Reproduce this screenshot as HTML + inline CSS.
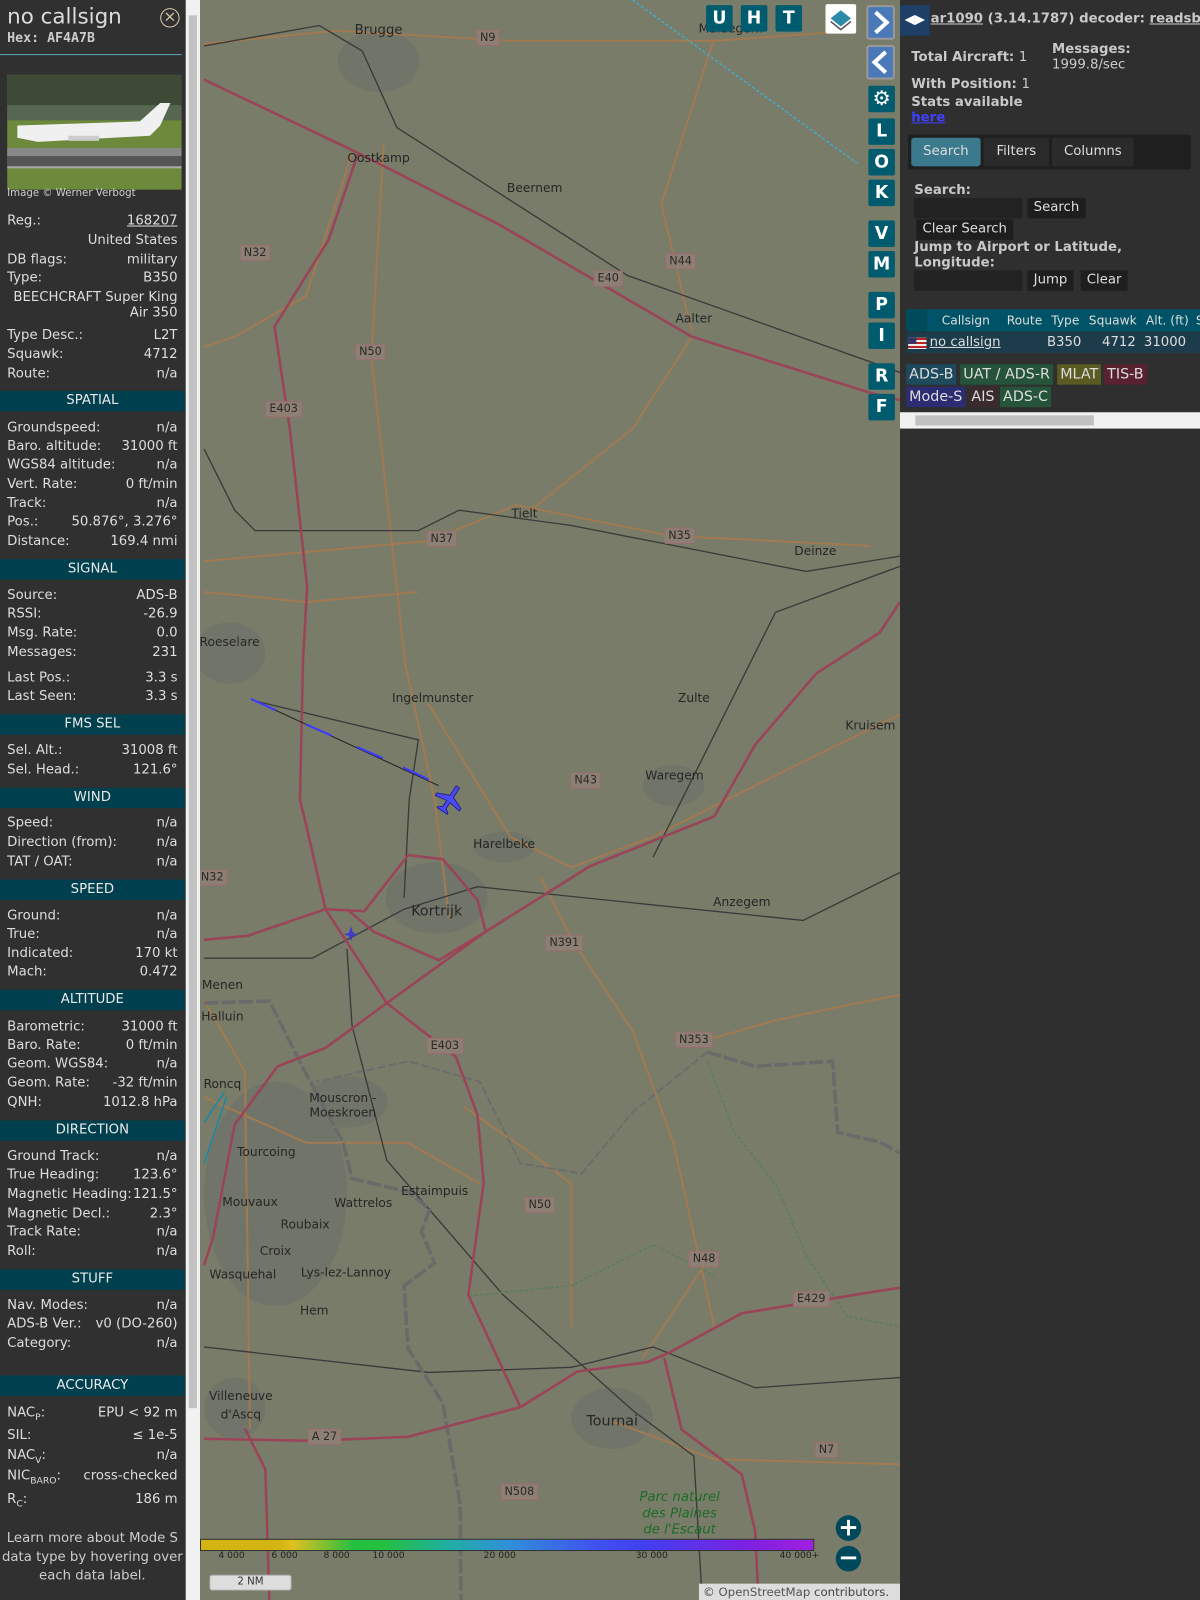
<!DOCTYPE html>
<html><head><meta charset="utf-8">
<style>
*{margin:0;padding:0;box-sizing:border-box}
body{width:1200px;height:1600px;overflow:hidden;background:#2f2f2f;font-family:"DejaVu Sans","Liberation Sans",sans-serif;font-size:13px;color:#ddd;position:relative}
#wrap{position:absolute;left:0;top:0;width:1176px;height:1568px;transform:scale(1.020408);transform-origin:0 0}
#left{position:absolute;left:0;top:0;width:182px;height:1568px;background:#303030}
.r{position:absolute;left:7px;width:167px;height:18px;line-height:18px;white-space:nowrap}
.r b{font-weight:normal;float:right}
.h{position:absolute;left:0;width:181px;height:20px;line-height:20px;background:#003f4d;text-align:center;color:#e8e8e8}
#sb{position:absolute;left:182px;top:0;width:14px;height:1568px;background:#f1f1f1}
#sb i{position:absolute;left:3px;top:15px;width:8px;height:1365px;background:#c1c1c1}
#map{position:absolute;left:196px;top:0;width:686px;height:1568px;background:#787c69;overflow:hidden}
.t{position:absolute;color:#262626;font-size:12px;white-space:nowrap;transform:translate(-50%,-50%)}
.n{position:absolute;font-size:11px;color:#2a2a2a;background:#8d7f74;border:1px solid #9a6e70;border-radius:2px;padding:0 3px;line-height:14px;transform:translate(-50%,-50%)}
.mb{position:absolute;width:26px;height:26px;background:#005b6e;color:#fff;font-weight:bold;font-size:17px;text-align:center;line-height:26px;border-radius:2px}
#right{position:absolute;left:882px;top:0;width:294px;height:1568px;background:#2f2f2f;overflow:hidden}
.bd{font-weight:bold;color:#c8c8c8}
.btn{position:absolute;background:#1e1e1e;color:#ddd;height:20px;line-height:20px;padding:0 6px}
.bg{position:absolute;height:20px;line-height:20px;padding:0 3px;color:#ddd;font-size:14px}
</style></head><body><div id="wrap">
<div id="left">
<div style="position:absolute;left:7px;top:4px;font-size:21px;color:#ddd">no callsign</div>
<div style="position:absolute;left:157px;top:8px;width:19px;height:19px;border:1.5px solid #d8c9a8;border-radius:50%;color:#d8c9a8;text-align:center;line-height:15px;font-size:15px">×</div>
<div style="position:absolute;left:7px;top:30px;font-family:'DejaVu Sans Mono',monospace;font-weight:bold;font-size:13px;color:#ccc">Hex: AF4A7B</div>
<div style="position:absolute;left:0;top:53px;width:178px;height:1px;background:#5aa8c0"></div>
<svg style="position:absolute;left:7px;top:73px" width="171" height="113">
<rect width="171" height="113" fill="#6d8a3c"/><rect width="171" height="40" fill="#3d4a35"/>
<rect y="30" width="171" height="15" fill="#566650"/>
<rect y="72" width="171" height="8" fill="#888"/><rect y="80" width="171" height="10" fill="#555"/><rect y="90" width="171" height="2" fill="#aaa"/>
<path d="M10 50 L130 46 L150 28 L160 28 L150 50 L140 60 L30 66 L10 62 Z" fill="#f0f0f0"/>
<rect x="60" y="60" width="30" height="5" fill="#ccc"/>
</svg>
<div style="position:absolute;left:7px;top:184px;font-size:10px;color:#ccc">Image © Werner Verbogt</div>
<div class="r" style="top:208px">Reg.:<b style="text-decoration:underline">168207</b></div>
<div class="r" style="top:227px"><b>United States</b></div>
<div class="r" style="top:246px">DB flags:<b>military</b></div>
<div class="r" style="top:264px">Type:<b>B350</b></div>
<div class="r" style="top:283px;text-align:right">BEECHCRAFT Super King</div>
<div class="r" style="top:298px"><b>Air 350</b></div>
<div class="r" style="top:320px">Type Desc.:<b>L2T</b></div>
<div class="r" style="top:339px">Squawk:<b>4712</b></div>
<div class="r" style="top:358px">Route:<b>n/a</b></div>
<div class="h" style="top:383px">SPATIAL</div>
<div class="r" style="top:411px">Groundspeed:<b>n/a</b></div>
<div class="r" style="top:429px">Baro. altitude:<b>31000 ft</b></div>
<div class="r" style="top:447px">WGS84 altitude:<b>n/a</b></div>
<div class="r" style="top:466px">Vert. Rate:<b>0 ft/min</b></div>
<div class="r" style="top:485px">Track:<b>n/a</b></div>
<div class="r" style="top:503px">Pos.:<b>50.876°, 3.276°</b></div>
<div class="r" style="top:522px">Distance:<b>169.4 nmi</b></div>
<div class="h" style="top:548px">SIGNAL</div>
<div class="r" style="top:575px">Source:<b>ADS-B</b></div>
<div class="r" style="top:593px">RSSI:<b>-26.9</b></div>
<div class="r" style="top:612px">Msg. Rate:<b>0.0</b></div>
<div class="r" style="top:631px">Messages:<b>231</b></div>
<div class="r" style="top:656px">Last Pos.:<b>3.3 s</b></div>
<div class="r" style="top:674px">Last Seen:<b>3.3 s</b></div>
<div class="h" style="top:700px">FMS SEL</div>
<div class="r" style="top:727px">Sel. Alt.:<b>31008 ft</b></div>
<div class="r" style="top:746px">Sel. Head.:<b>121.6°</b></div>
<div class="h" style="top:772px">WIND</div>
<div class="r" style="top:798px">Speed:<b>n/a</b></div>
<div class="r" style="top:817px">Direction (from):<b>n/a</b></div>
<div class="r" style="top:836px">TAT / OAT:<b>n/a</b></div>
<div class="h" style="top:862px">SPEED</div>
<div class="r" style="top:889px">Ground:<b>n/a</b></div>
<div class="r" style="top:907px">True:<b>n/a</b></div>
<div class="r" style="top:926px">Indicated:<b>170 kt</b></div>
<div class="r" style="top:944px">Mach:<b>0.472</b></div>
<div class="h" style="top:970px">ALTITUDE</div>
<div class="r" style="top:998px">Barometric:<b>31000 ft</b></div>
<div class="r" style="top:1016px">Baro. Rate:<b>0 ft/min</b></div>
<div class="r" style="top:1034px">Geom. WGS84:<b>n/a</b></div>
<div class="r" style="top:1053px">Geom. Rate:<b>-32 ft/min</b></div>
<div class="r" style="top:1072px">QNH:<b>1012.8 hPa</b></div>
<div class="h" style="top:1098px">DIRECTION</div>
<div class="r" style="top:1125px">Ground Track:<b>n/a</b></div>
<div class="r" style="top:1143px">True Heading:<b>123.6°</b></div>
<div class="r" style="top:1162px">Magnetic Heading:<b>121.5°</b></div>
<div class="r" style="top:1181px">Magnetic Decl.:<b>2.3°</b></div>
<div class="r" style="top:1199px">Track Rate:<b>n/a</b></div>
<div class="r" style="top:1218px">Roll:<b>n/a</b></div>
<div class="h" style="top:1244px">STUFF</div>
<div class="r" style="top:1271px">Nav. Modes:<b>n/a</b></div>
<div class="r" style="top:1289px">ADS-B Ver.:<b>v0 (DO-260)</b></div>
<div class="r" style="top:1308px">Category:<b>n/a</b></div>
<div class="h" style="top:1348px">ACCURACY</div>
<div class="r" style="top:1376px">NAC<sub style="font-size:9px">P</sub>:<b>EPU &lt; 92 m</b></div>
<div class="r" style="top:1398px">SIL:<b>≤ 1e-5</b></div>
<div class="r" style="top:1418px">NAC<sub style="font-size:9px">V</sub>:<b>n/a</b></div>
<div class="r" style="top:1438px">NIC<sub style="font-size:9px">BARO</sub>:<b>cross-checked</b></div>
<div class="r" style="top:1461px">R<sub style="font-size:9px">C</sub>:<b>186 m</b></div>
<div style="position:absolute;left:0;top:1499px;width:181px;text-align:center;line-height:18.5px;color:#ccc">Learn more about Mode S data type by hovering over each data label.</div>
</div>
<div id="sb"><i></i></div>

<div id="map">
<svg width="686" height="1568" style="position:absolute;left:0;top:0" fill="none">
<g transform="translate(-196,0)">
<g fill="#6e726a" opacity="0.7">
<ellipse cx="371" cy="60" rx="40" ry="30"/><ellipse cx="225" cy="640" rx="35" ry="30"/><ellipse cx="428" cy="880" rx="50" ry="35"/>
<ellipse cx="270" cy="1170" rx="70" ry="110"/><ellipse cx="600" cy="1390" rx="40" ry="30"/><ellipse cx="340" cy="1080" rx="40" ry="25"/>
<ellipse cx="660" cy="770" rx="30" ry="20"/><ellipse cx="494" cy="830" rx="30" ry="15"/><ellipse cx="230" cy="1380" rx="30" ry="30"/>
</g>
<g stroke="#a27a52" stroke-width="2">
<path d="M699,40 L648,200 L678,325"/><path d="M376,140 L364,350 L397,650 L426,784 L440,900"/>
<path d="M200,550 L422,530 L506,495 L657,525 L853,535"/><path d="M200,43 L330,30 L500,40 L700,40 L840,30"/>
<path d="M678,330 L620,420 L520,500"/><path d="M345,150 L300,290 L230,330 L200,340"/>
<path d="M200,580 L300,590 L410,580"/><path d="M420,690 L500,820 L560,850 L640,820 L760,760 L882,700"/>
<path d="M530,860 L560,920 L620,1010 L660,1120 L700,1300"/><path d="M455,1085 L520,1130 L560,1160 L560,1300"/>
<path d="M200,1075 L300,1120 L400,1120 L470,1160"/><path d="M690,1020 L760,1000 L830,985 L882,975"/>
<path d="M600,1393 L700,1430 L882,1435"/><path d="M690,1240 L630,1330"/><path d="M200,980 L240,1050 L245,1400"/>
</g>
<g stroke="#3a3a3a" stroke-width="1.3">
<path d="M200,45 L313,25 L355,50 L389,125 L615,270 L882,365"/>
<path d="M200,440 L230,500 L250,520 L410,520 L450,500 L560,515 L790,560 L882,545"/>
<path d="M250,687 L410,725 L401,784 L396,880"/>
<path d="M882,855 L787,902 L468,869 L396,891 L306,939 L200,939"/>
<path d="M340,930 L345,1005 L379,1137 L493,1269 L621,1383 L680,1427 L690,1600"/>
<path d="M640,840 L760,600 L882,555"/><path d="M200,1320 L420,1345 L560,1340 L640,1320 L740,1360 L882,1350"/>
</g>
<g stroke="#6a6a6a" stroke-width="3.5" stroke-dasharray="14,3">
<path d="M200,983 L264,981 L298,1049 L336,1119 L345,1155 L400,1168 L421,1185 L413,1207 L426,1238 L396,1260 L400,1322 L434,1375 L451,1475 L452,1600"/>
<path d="M693,1031 L740,1045 L816,1040 L821,1110 L862,1119 L882,1130"/>
</g>
<g stroke="#6c6c6c" stroke-width="1.8" stroke-dasharray="8,3">
<path d="M693,1031 L620,1090 L570,1150 L510,1140 L470,1060 L400,1040 L310,1060"/>
</g>
<g stroke="#5a7e56" stroke-width="1.5" stroke-dasharray="3,2">
<path d="M693,1040 L720,1110 L760,1160 L790,1230 L830,1290 L882,1300"/><path d="M460,1270 L560,1260 L640,1220 L700,1250"/>
</g>
<g stroke="#9b4358" stroke-width="2.5">
<path d="M200,78 L351,150 L489,220 L678,330 L853,385 L882,392"/>
<path d="M351,150 L322,235 L269,320 L284,420 L301,575 L297,645 L294,784 L298,800 L319,891 L379,983 L447,1036 L468,1093 L474,1159 L459,1269 L510,1379"/>
<path d="M882,590 L862,620 L800,660 L740,730 L700,800 L578,849 L476,913 L379,983 L319,1027 L272,1045 L230,1102 L209,1212 L200,1240"/>
<path d="M200,921 L243,917 L319,891 L357,893 L400,838 L434,842 L468,882 L476,913"/>
<path d="M340,891 L366,913 L430,941 L476,913"/>
<path d="M200,1410 L306,1412 L400,1408 L510,1379 L566,1344 L634,1335 L655,1326 L727,1287 L862,1265 L882,1262"/>
<path d="M651,1331 L668,1401 L727,1445 L740,1500 L745,1600"/><path d="M240,1400 L260,1440 L265,1600"/>
</g>
<path d="M620,0 L840,160" stroke="#3ab0d8" stroke-width="1.3" stroke-dasharray="3,2"/>
<path d="M220,1070 L200,1100 M222,1075 L200,1140" stroke="#1888a8" stroke-width="1.5"/>
<path d="M246,685 L430,770" stroke="#222" stroke-width="1"/>
<path d="M246,685 L270,696 M300,710 L325,721 M350,732 L375,743 M395,752 L420,764" stroke="#3b3bff" stroke-width="2"/>
<g transform="translate(441,783) rotate(33)" fill="#4a4af5" stroke="#1a1a80" stroke-width="0.8">
<path d="M-2,-14 L2,-14 L2,-3 L14,2 L14,5 L2,3 L2,10 L6,13 L6,14 L-6,14 L-6,13 L-2,10 L-2,3 L-14,5 L-14,2 L-2,-3 Z"/></g>
<path d="M344,908 l2,6 l5,2 l-5,1 l-2,5 l-2,-5 l-5,-1 l5,-2z" fill="#3b3bcc"/>
</g>
</svg>
<div class="t" style="left:175px;top:30px;font-size:13px">Brugge</div>
<div class="t" style="left:520px;top:28px">Maldegem</div>
<div class="t" style="left:175px;top:155px">Oostkamp</div>
<div class="t" style="left:328px;top:184px">Beernem</div>
<div class="t" style="left:484px;top:312px">Aalter</div>
<div class="t" style="left:318px;top:503px">Tielt</div>
<div class="t" style="left:603px;top:540px">Deinze</div>
<div class="t" style="left:29px;top:629px">Roeselare</div>
<div class="t" style="left:228px;top:684px">Ingelmunster</div>
<div class="t" style="left:484px;top:684px">Zulte</div>
<div class="t" style="left:657px;top:711px">Kruisem</div>
<div class="t" style="left:465px;top:760px">Waregem</div>
<div class="t" style="left:298px;top:827px">Harelbeke</div>
<div class="t" style="left:232px;top:893px;font-size:14px">Kortrijk</div>
<div class="t" style="left:531px;top:884px">Anzegem</div>
<div class="t" style="left:22px;top:965px">Menen</div>
<div class="t" style="left:22px;top:996px">Halluin</div>
<div class="t" style="left:22px;top:1062px">Roncq</div>
<div class="t" style="left:140px;top:1076px">Mouscron -</div>
<div class="t" style="left:140px;top:1090px">Moeskroen</div>
<div class="t" style="left:65px;top:1129px">Tourcoing</div>
<div class="t" style="left:49px;top:1178px">Mouvaux</div>
<div class="t" style="left:160px;top:1179px">Wattrelos</div>
<div class="t" style="left:230px;top:1167px">Estaimpuis</div>
<div class="t" style="left:103px;top:1200px">Roubaix</div>
<div class="t" style="left:74px;top:1226px">Croix</div>
<div class="t" style="left:42px;top:1249px">Wasquehal</div>
<div class="t" style="left:143px;top:1247px">Lys-lez-Lannoy</div>
<div class="t" style="left:112px;top:1284px">Hem</div>
<div class="t" style="left:40px;top:1368px">Villeneuve</div>
<div class="t" style="left:40px;top:1386px">d'Ascq</div>
<div class="t" style="left:404px;top:1393px;font-size:14px">Tournai</div>
<div class="t" style="left:470px;top:1484px;color:#1c6c28;font-style:italic;font-size:13px;text-align:center;line-height:16px">Parc naturel<br>des Plaines<br>de l'Escaut</div>
<div class="n" style="left:282px;top:37px">N9</div>
<div class="n" style="left:54px;top:248px">N32</div>
<div class="n" style="left:471px;top:256px">N44</div>
<div class="n" style="left:400px;top:273px">E40</div>
<div class="n" style="left:167px;top:345px">N50</div>
<div class="n" style="left:82px;top:401px">E403</div>
<div class="n" style="left:237px;top:528px">N37</div>
<div class="n" style="left:470px;top:525px">N35</div>
<div class="n" style="left:378px;top:765px">N43</div>
<div class="n" style="left:12px;top:860px">N32</div>
<div class="n" style="left:357px;top:924px">N391</div>
<div class="n" style="left:240px;top:1025px">E403</div>
<div class="n" style="left:484px;top:1019px">N353</div>
<div class="n" style="left:333px;top:1181px">N50</div>
<div class="n" style="left:494px;top:1234px">N48</div>
<div class="n" style="left:599px;top:1273px">E429</div>
<div class="n" style="left:122px;top:1408px">A 27</div>
<div class="n" style="left:313px;top:1462px">N508</div>
<div class="n" style="left:614px;top:1421px">N7</div>
<div class="mb" style="left:496px;top:5px">U</div>
<div class="mb" style="left:530px;top:5px">H</div>
<div class="mb" style="left:564px;top:5px">T</div>
<div style="position:absolute;left:613px;top:4px;width:30px;height:29px;background:#fff;border-radius:2px"><svg width="30" height="29"><path d="M15 6 L25 14 L15 22 L5 14Z" fill="#2a8aa8"/><path d="M5 17 L15 25 L25 17" stroke="#555" stroke-width="1.5" fill="none"/></svg></div>
<div style="position:absolute;left:653px;top:5px;width:28px;height:34px;background:#4a78b8;border:2px solid #999;border-radius:3px"><svg width="24" height="30"><path d="M7 5 L18 15 L7 25" stroke="#fff" stroke-width="4" fill="none"/></svg></div>
<div style="position:absolute;left:653px;top:44px;width:28px;height:34px;background:#4a78b8;border:2px solid #999;border-radius:3px"><svg width="24" height="30"><path d="M17 5 L6 15 L17 25" stroke="#fff" stroke-width="4" fill="none"/></svg></div>
<div class="mb" style="left:655px;top:84px;font-size:20px;line-height:24px">⚙</div>
<div class="mb" style="left:655px;top:116px">L</div>
<div class="mb" style="left:655px;top:146px">O</div>
<div class="mb" style="left:655px;top:176px">K</div>
<div class="mb" style="left:655px;top:216px">V</div>
<div class="mb" style="left:655px;top:246px">M</div>
<div class="mb" style="left:655px;top:286px">P</div>
<div class="mb" style="left:655px;top:316px">I</div>
<div class="mb" style="left:655px;top:356px">R</div>
<div class="mb" style="left:655px;top:386px">F</div>
<div style="position:absolute;left:0;top:1508px;width:602px;height:12px;border:1px solid #333;background:linear-gradient(90deg,#d4b412 0%,#d4b412 13%,#e0c020 15%,#24c040 25%,#24c040 30%,#20b0a0 40%,#3090d8 50%,#4050f0 65%,#4040f0 72%,#8020e0 90%,#a020e0 100%)"></div>
<div style="position:absolute;left:0;top:1520px;width:686px;font-size:9px;color:#222;white-space:nowrap">
<span style="position:absolute;left:18px">4 000</span><span style="position:absolute;left:70px">6 000</span><span style="position:absolute;left:121px">8 000</span><span style="position:absolute;left:169px">10 000</span><span style="position:absolute;left:278px">20 000</span><span style="position:absolute;left:427px">30 000</span><span style="position:absolute;left:568px">40 000+</span></div>
<div style="position:absolute;left:9px;top:1543px;width:81px;height:16px;background:#ddd;border:1px solid #999;border-radius:3px;text-align:center;font-size:10px;line-height:14px;color:#333">2 NM</div>
<div style="position:absolute;left:623px;top:1485px;width:25px;height:25px;border-radius:50%;background:#00485c;color:#fff;font-size:24px;font-weight:bold;text-align:center;line-height:24px">+</div>
<div style="position:absolute;left:623px;top:1515px;width:25px;height:25px;border-radius:50%;background:#00485c;color:#fff;font-size:24px;font-weight:bold;text-align:center;line-height:22px">−</div>
<div style="position:absolute;left:489px;top:1552px;width:197px;height:16px;background:#ddd;font-size:11.5px;color:#444;line-height:16px;padding-left:4px;white-space:nowrap">© <span style="color:#555">OpenStreetMap</span> contributors.</div>
</div>

<div id="right">
<div style="position:absolute;left:0;top:5px;width:29px;height:30px;background:#1e4066;color:#fff;font-size:13px;line-height:30px;text-align:center">◀▶</div>
<div class="bd" style="position:absolute;left:30px;top:11px;font-size:13px;white-space:nowrap"><u>ar1090</u> (3.14.1787) decoder: <u>readsb</u></div>
<div class="bd" style="position:absolute;left:11px;top:49px">Total Aircraft: <span style="font-weight:normal">1</span></div>
<div class="bd" style="position:absolute;left:149px;top:41px">Messages:</div>
<div style="position:absolute;left:149px;top:56px;color:#ccc">1999.8/sec</div>
<div class="bd" style="position:absolute;left:11px;top:75px">With Position: <span style="font-weight:normal">1</span></div>
<div class="bd" style="position:absolute;left:11px;top:93px">Stats available</div>
<div style="position:absolute;left:11px;top:108px;color:#4040ff;font-weight:bold;text-decoration:underline">here</div>
<div style="position:absolute;left:8px;top:132px;width:277px;height:34px;background:#1f1f1f"></div>
<div style="position:absolute;left:11px;top:135px;width:68px;height:28px;background:#3a7a8c;color:#ddd;line-height:28px;text-align:center;border-radius:3px">Search</div>
<div style="position:absolute;left:82px;top:135px;width:64px;height:28px;background:#2b2b2b;color:#ddd;line-height:28px;text-align:center">Filters</div>
<div style="position:absolute;left:149px;top:135px;width:80px;height:28px;background:#2b2b2b;color:#ddd;line-height:28px;text-align:center">Columns</div>
<div class="bd" style="position:absolute;left:14px;top:179px">Search:</div>
<div style="position:absolute;left:14px;top:194px;width:106px;height:20px;background:#222"></div>
<div class="btn" style="left:125px;top:194px">Search</div>
<div class="btn" style="left:16px;top:215px">Clear Search</div>
<div class="bd" style="position:absolute;left:14px;top:235px">Jump to Airport or Latitude,</div>
<div class="bd" style="position:absolute;left:14px;top:250px">Longitude:</div>
<div style="position:absolute;left:14px;top:265px;width:106px;height:20px;background:#222"></div>
<div class="btn" style="left:125px;top:265px">Jump</div>
<div class="btn" style="left:177px;top:265px">Clear</div>
<div style="position:absolute;left:6px;top:303px;width:312px;height:22px;background:#005366;font-size:12px;color:#ddd;line-height:22px">
<span style="position:absolute;left:0;width:20px;height:22px;background:#004a5c"></span>
<span style="position:absolute;left:23px;width:71px;text-align:center">Callsign</span>
<span style="position:absolute;left:97px;width:38px;text-align:center">Route</span>
<span style="position:absolute;left:138px;width:36px;text-align:center">Type</span>
<span style="position:absolute;left:177px;width:51px;text-align:center">Squawk</span>
<span style="position:absolute;left:231px;width:50px;text-align:center">Alt. (ft)</span>
<span style="position:absolute;left:284px">S</span></div>
<div style="position:absolute;left:6px;top:326px;width:312px;height:20px;background:#1d3c4b;line-height:20px;font-size:13px">
<span style="position:absolute;left:2px;top:5px;width:18px;height:11px;background:repeating-linear-gradient(#b22 0 2px,#eee 2px 4px)"><i style="position:absolute;left:0;top:0;width:8px;height:6px;background:#336"></i></span>
<span style="position:absolute;left:23px;text-decoration:underline">no callsign</span>
<span style="position:absolute;left:138px">B350</span>
<span style="position:absolute;left:192px">4712</span>
<span style="position:absolute;left:233px">31000</span></div>
<div class="bg" style="left:6px;top:357px;background:#1e4a5e">ADS-B</div>
<div class="bg" style="left:59px;top:357px;background:#26543a">UAT / ADS-R</div>
<div class="bg" style="left:154px;top:357px;background:#5a5a22">MLAT</div>
<div class="bg" style="left:200px;top:357px;background:#5a2230">TIS-B</div>
<div class="bg" style="left:6px;top:379px;background:#2c2c72">Mode-S</div>
<div class="bg" style="left:67px;top:379px;background:#3a2a2e">AIS</div>
<div class="bg" style="left:98px;top:379px;background:#26543a">ADS-C</div>
<div style="position:absolute;left:0;top:404px;width:318px;height:16px;background:#f1f1f1"><div style="position:absolute;left:15px;top:3px;width:175px;height:10px;background:#c1c1c1"></div></div>
</div>
</div></body></html>
